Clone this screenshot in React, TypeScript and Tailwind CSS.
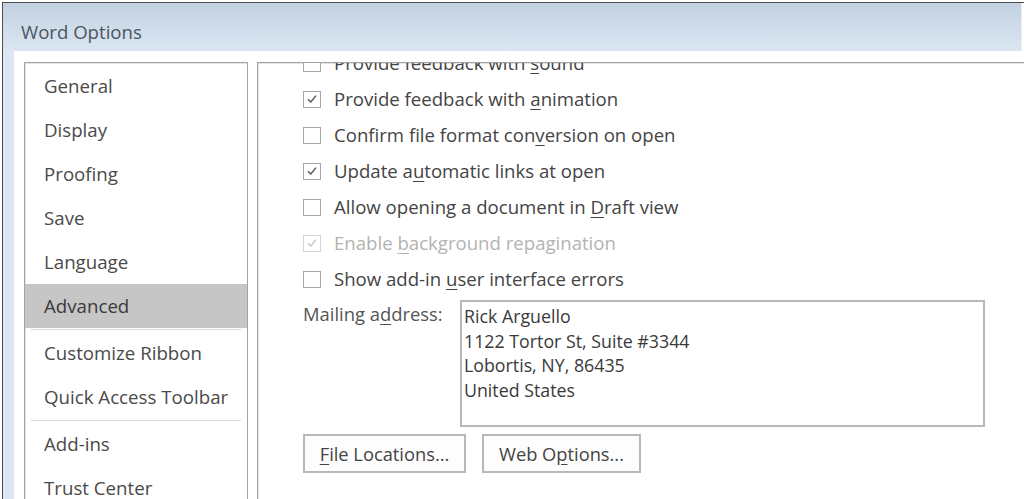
import React from "react";

const font = { fontFamily: '"Open Sans", "Noto Sans", sans-serif' };

const navItems = [
  { label: "General" },
  { label: "Display" },
  { label: "Proofing" },
  { label: "Save" },
  { label: "Language" },
  { label: "Advanced", active: true, sepAfter: true },
  { label: "Customize Ribbon" },
  { label: "Quick Access Toolbar", sepAfter: true },
  { label: "Add-ins" },
  { label: "Trust Center" },
];

type Opt = { pre: string; key: string; post: string; checked?: boolean; disabled?: boolean };

const options: Opt[] = [
  { pre: "Provide feedback with ", key: "s", post: "ound" },
  { pre: "Provide feedback with ", key: "a", post: "nimation", checked: true },
  { pre: "Confirm file format con", key: "v", post: "ersion on open" },
  { pre: "Update a", key: "u", post: "tomatic links at open", checked: true },
  { pre: "Allow opening a document in ", key: "D", post: "raft view" },
  { pre: "Enable ", key: "b", post: "ackground repagination", checked: true, disabled: true },
  { pre: "Show add-in ", key: "u", post: "ser interface errors" },
];

function CheckBox({ checked, disabled }: { checked?: boolean; disabled?: boolean }) {
  return (
    <span
      className={`flex h-[17px] w-[18px] shrink-0 items-center justify-center border bg-white ${
        disabled ? "border-[#d4d4d4]" : "border-[#a6a6a6]"
      }`}
    >
      {checked && (
        <svg viewBox="0 0 12 12" className="h-[12px] w-[12px]">
          <path
            d="M2 6.2 L4.8 9 L10 2.6"
            fill="none"
            stroke={disabled ? "#c4c4c4" : "#555555"}
            strokeWidth="1.4"
          />
        </svg>
      )}
    </span>
  );
}

export default function App() {
  return (
    <div className="h-[499px] w-[1024px] overflow-hidden bg-white" style={font}>
      <div className="h-[2px] bg-white" />
      <div className="ml-[2px] flex h-[497px] flex-col border-l border-t border-[#4d4d4d]">
        <div className="flex h-[48px] w-[1019px] items-center border-r border-[#e8eef5] bg-gradient-to-b from-[#c2d1e0] to-[#dbe6f2] pl-[18px] pt-[10px] text-[18.6px] text-[#4b5663]">
          Word Options
        </div>
        <div className="flex min-h-0 flex-1">
          <div className="w-[11px] shrink-0 bg-[#dce7f3]" />
          <div className="flex min-h-0 flex-1 gap-[9px] pl-[10px] pt-[11px]">
            {/* sidebar */}
            <div className="w-[224px] shrink-0 border border-b-0 border-[#a3a3a3] pt-[1px] shadow-[inset_1px_1px_0_#e4e4e4]">
              {navItems.map((it) => (
                <div key={it.label}>
                  <div
                    className={`flex h-[44px] items-center pl-[19px] text-[18.7px] ${
                      it.active ? "bg-[#c6c6c6] text-[#3a3a3a]" : "text-[#4a4a4a]"
                    }`}
                  >
                    {it.label}
                  </div>
                  {it.sepAfter && <div className="mx-[6px] my-[1px] h-px bg-[#dadada]" />}
                </div>
              ))}
            </div>
            {/* content panel */}
            <div className="min-w-0 flex-1 overflow-hidden border-l border-t border-[#a3a3a3] pl-[45px] shadow-[inset_1px_1px_0_#e4e4e4]">
              <div className="-mt-[18px]">
                {options.map((o, i) => (
                  <div key={i} className="flex h-[36px] items-center gap-[13px]">
                    <CheckBox checked={o.checked} disabled={o.disabled} />
                    <span
                      className={`whitespace-nowrap text-[18.6px] ${
                        o.disabled ? "text-[#b3b3b3]" : "text-[#444444]"
                      }`}
                    >
                      {o.pre}
                      <span className="underline underline-offset-[3px]">{o.key}</span>
                      {o.post}
                    </span>
                  </div>
                ))}
                <div className="mt-[3px] flex items-start">
                  <div className="w-[157px] shrink-0 pt-[2px] text-[18.4px] leading-[24px] text-[#555555]">
                    Mailing a<span className="underline underline-offset-[3px]">d</span>dress:
                  </div>
                  <div className="h-[127px] w-[525px] border-2 border-[#b8b8b8] px-[2px] pt-[2px] text-[17.8px] leading-[24.5px] text-[#3a3a3a]">
                    <div>Rick Arguello</div>
                    <div>1122 Tortor St, Suite #3344</div>
                    <div>Lobortis, NY, 86435</div>
                    <div>United States</div>
                  </div>
                </div>
                <div className="mt-[7px] flex gap-[16px] text-[18.3px] text-[#444444]">
                  <button className="h-[39px] w-[163px] border-2 border-[#b8b8b8] bg-[#fdfdfd]">
                    <span className="underline underline-offset-[3px]">F</span>ile Locations...
                  </button>
                  <button className="h-[39px] w-[159px] border-2 border-[#b8b8b8] bg-[#fdfdfd]">
                    Web O<span className="underline underline-offset-[3px]">p</span>tions...
                  </button>
                </div>
              </div>
            </div>
          </div>
        </div>
      </div>
    </div>
  );
}
